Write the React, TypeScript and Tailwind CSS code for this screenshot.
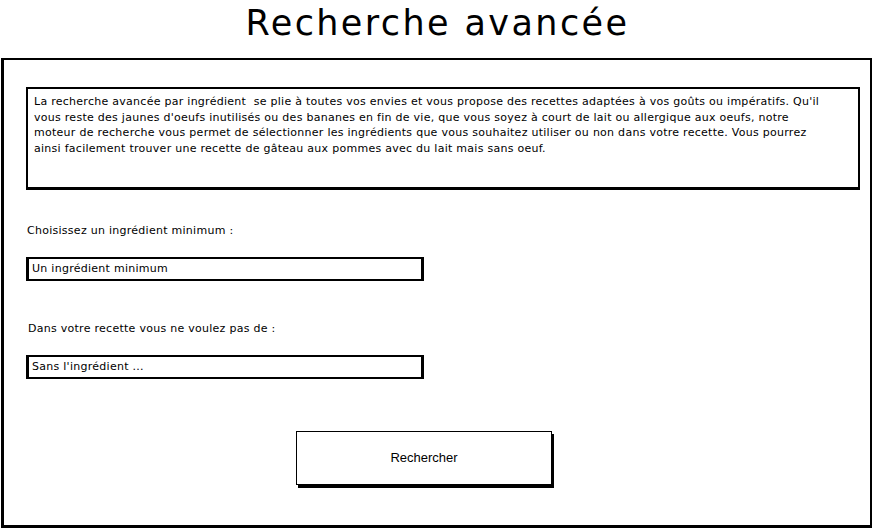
export default function App() {
  return (
    <main className="w-[875px] h-[530px] bg-white text-black font-['DejaVu_Sans',sans-serif] overflow-hidden">
      {/* TITRE */}
      <h1 className="h-[58px] flex items-center justify-center text-[35px] font-normal tracking-[2.4px] pb-[12px]">
        Recherche avancée
      </h1>

      {/* CADRE */}
      <section className="ml-[1px] w-[871px] h-[470px] border-2 border-black border-l-[3px] border-b-[3px] pt-[27px] pl-[22px]">
        <div className="w-[834px] h-[103px] border-2 border-black border-b-[3px] px-[6px] pt-[5px] text-[11px] leading-[15.5px] tracking-[0.27px]">
          La recherche avancée par ingrédient&nbsp; se plie à toutes vos envies et vous propose des recettes adaptées à vos goûts ou impératifs. Qu'il
          <br />
          vous reste des jaunes d'oeufs inutilisés ou des bananes en fin de vie, que vous soyez à court de lait ou allergique aux oeufs, notre
          <br />
          moteur de recherche vous permet de sélectionner les ingrédients que vous souhaitez utiliser ou non dans votre recette. Vous pourrez
          <br />
          ainsi facilement trouver une recette de gâteau aux pommes avec du lait mais sans oeuf.
        </div>

        <p className="mt-[33px] text-[11px] leading-[15px] tracking-[0.27px] pl-[1px]">Choisissez un ingrédient minimum :</p>

        <div className="mt-[19px] w-[398px] h-[24px] border-2 border-black border-x-[3px] flex items-center px-[3px] text-[11px] tracking-[0.27px]">
          Un ingrédient minimum
        </div>

        <p className="mt-[40px] text-[11px] leading-[15px] tracking-[0.27px] pl-[2px]">Dans votre recette vous ne voulez pas de :</p>

        <div className="mt-[19px] w-[398px] h-[24px] border-2 border-black border-x-[3px] flex items-center px-[3px] text-[11px] tracking-[0.27px]">
          Sans l'ingrédient ...
        </div>

        <div className="flex pl-[270px] mt-[52px]">
          <button className="w-[256px] h-[54px] border border-black bg-white shadow-[2px_3px_0_0_#000] text-[13px] font-['Liberation_Sans',sans-serif]">
            Rechercher
          </button>
        </div>
      </section>
    </main>
  )
}
